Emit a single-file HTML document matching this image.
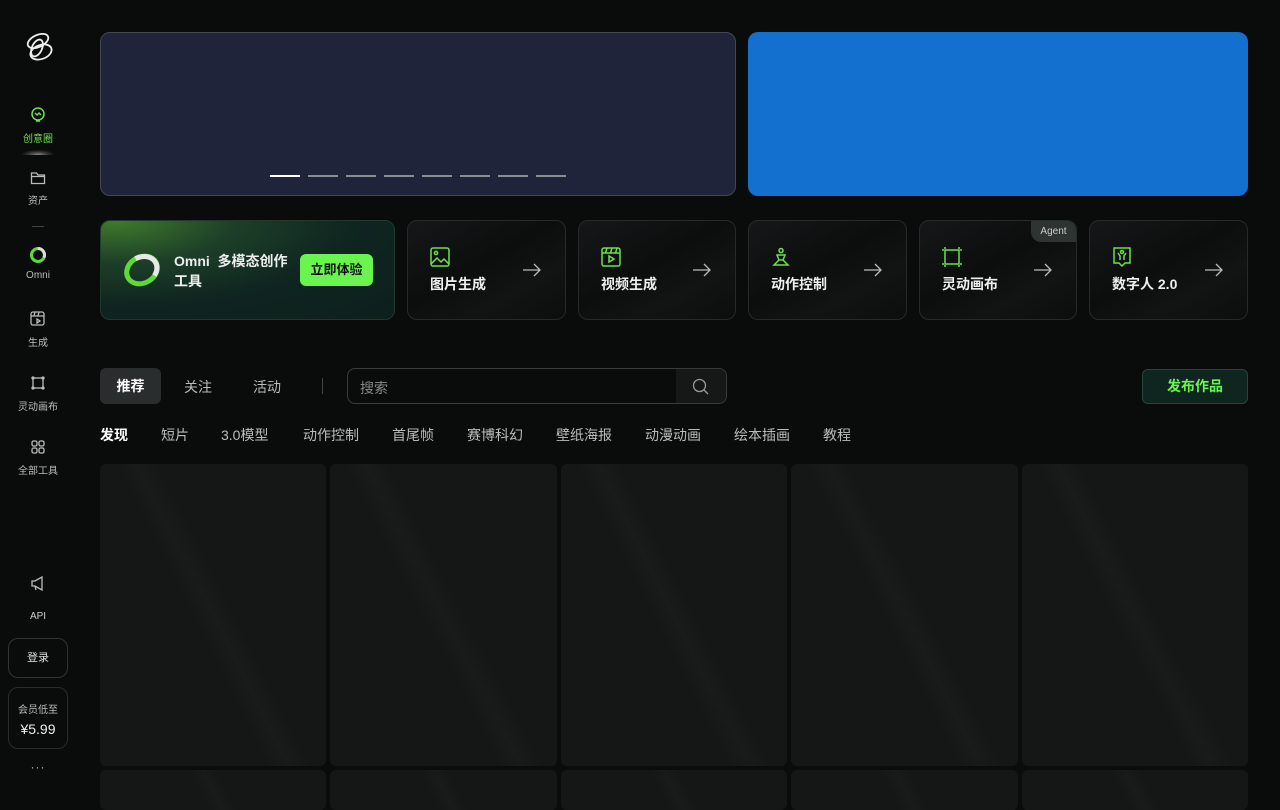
<!DOCTYPE html>
<html><head><meta charset="utf-8">
<style>
*{box-sizing:border-box;margin:0;padding:0}
body{width:1280px;height:800px;overflow:hidden;background:#0a0c0c;font-family:"Liberation Sans","Noto Sans CJK SC",sans-serif;color:#ddd;position:relative}
.abs{position:absolute}
.nav{position:absolute;left:0;width:76px;text-align:center;font-size:10px;color:#bbb}
.nav svg{display:block;margin:0 auto 6px}
.tool{position:absolute;top:220px;height:100px;border-radius:10px;border:1px solid #262a2a;background:linear-gradient(150deg,#151818 0%,#0c0e0e 45%,#121414 70%,#0c0d0d 100%)}
.tool svg{position:absolute;left:22px;top:26px}
.tool .t{position:absolute;left:22px;top:53px;font-size:14px;font-weight:bold;color:#eee}
.tool svg.ar{position:absolute;left:auto;right:24px;top:42px}
.card{position:absolute;border-radius:6px;background:linear-gradient(63deg,#151616 0%,#151616 44%,#191a1a 50%,#151616 56%,#151616 100%)}
.cat{position:absolute;top:425px;font-size:14px;color:#bbb}
</style></head><body>
<!-- sidebar -->
<svg class="abs" style="left:21px;top:29px" width="36" height="36" viewBox="0 0 36 36" fill="none" stroke="#eee" stroke-width="1.8"><ellipse cx="17" cy="12" rx="11" ry="6" transform="rotate(-25 17 12)"/><ellipse cx="20" cy="23" rx="11" ry="7" transform="rotate(-20 20 23)"/><ellipse cx="16" cy="19" rx="5" ry="9" transform="rotate(25 16 19)"/></svg>
<div class="nav" style="top:106px;color:#6ee04a"><svg width="16" height="18" viewBox="0 0 16 18" fill="none" stroke="#6ee04a" stroke-width="1.5"><circle cx="8" cy="8" r="6"/><path d="M5 7l2 2 2-2 2 2M6 15h4"/></svg>创意圈</div>
<div class="abs" style="left:22px;top:150px;width:32px;height:5px;background:radial-gradient(ellipse at 50% 100%,#888 0%,#333 45%,transparent 75%)"></div>
<div class="nav" style="top:170px"><svg width="16" height="16" viewBox="0 0 16 16" fill="none" stroke="#bbb" stroke-width="1.3"><path d="M1.5 3h5l1.5 2h6.5v8.5h-13z M1.5 6.5h13"/></svg>资产</div>
<div class="abs" style="left:32px;top:226px;width:12px;height:1px;background:#444"></div>
<div class="nav" style="top:246px"><svg width="18" height="18" viewBox="0 0 18 18"><circle cx="9" cy="9" r="6.5" fill="none" stroke="#5fd83a" stroke-width="3"/><path d="M9 2.5a6.5 6.5 0 0 1 6 9" stroke="#ddd" stroke-width="3" fill="none"/></svg>Omni</div>
<div class="nav" style="top:310px"><svg width="18" height="18" viewBox="0 0 18 18" fill="none" stroke="#bbb" stroke-width="1.3"><rect x="2" y="2" width="13" height="13" rx="2"/><path d="M2 6h13M6 2l-1 4M10 2l-1 4M8 9v4l3-2z"/></svg>生成</div>
<div class="nav" style="top:374px"><svg width="18" height="18" viewBox="0 0 18 18" fill="none" stroke="#bbb" stroke-width="1.3"><rect x="4" y="4" width="10" height="10"/><circle cx="4" cy="4" r="1" fill="#bbb"/><circle cx="14" cy="4" r="1" fill="#bbb"/><circle cx="4" cy="14" r="1" fill="#bbb"/><circle cx="14" cy="14" r="1" fill="#bbb"/></svg>灵动画布</div>
<div class="nav" style="top:438px"><svg width="18" height="18" viewBox="0 0 18 18" fill="none" stroke="#bbb" stroke-width="1.3"><rect x="3" y="3" width="5" height="5" rx="1.5"/><rect x="10" y="3" width="5" height="5" rx="1.5"/><rect x="3" y="10" width="5" height="5" rx="1.5"/><rect x="10" y="10" width="5" height="5" rx="1.5"/></svg>全部工具</div>
<div class="nav" style="top:575px"><svg width="18" height="18" viewBox="0 0 18 18" fill="none" stroke="#bbb" stroke-width="1.3"><path d="M3 6h3l7-4v13l-7-4H3z M6 11l1 4"/></svg></div>
<div class="nav" style="top:611px;font-size:10px;color:#ccc">API</div>
<div class="abs" style="left:8px;top:638px;width:60px;height:40px;border:1px solid #333;border-radius:10px;text-align:center;line-height:38px;font-size:11px;color:#ddd">登录</div>
<div class="abs" style="left:8px;top:687px;width:60px;height:62px;border:1px solid #2a2c2c;border-radius:10px;text-align:center;font-size:10px;color:#bbb;padding-top:13px">会员低至<div style="font-size:14px;color:#eee;margin-top:5px">¥5.99</div></div>
<div class="nav" style="top:760px;font-size:12px;color:#bbb;letter-spacing:1px">···</div>

<!-- banners -->
<div class="abs" style="left:100px;top:32px;width:636px;height:164px;background:#20243a;border:1px solid #45474f;border-radius:10px"></div>
<div class="abs" style="left:270px;top:175px;width:30px;height:2px;background:#fff"></div>
<div class="abs" style="left:308px;top:175px;width:258px;height:2px;background:repeating-linear-gradient(90deg,#8a8c93 0 30px,transparent 30px 38px)"></div>
<div class="abs" style="left:748px;top:32px;width:500px;height:164px;background:#1470cf;border-radius:10px"></div>

<!-- omni card -->
<div class="abs" style="left:100px;top:220px;width:295px;height:100px;border-radius:10px;border:1px solid #1e3a2c;background:radial-gradient(ellipse at 5% 0%,#3f7a2c 0%,#1d3f28 30%,#0f2520 60%,#0d1f1c 100%)"></div>
<svg class="abs" style="left:122px;top:250px" width="40" height="40" viewBox="0 0 40 40"><g transform="rotate(-30 20 20)"><ellipse cx="20" cy="20" rx="16" ry="13" fill="none" stroke="#5fd83a" stroke-width="5"/><path d="M20 7a16 13 0 0 1 8 24" fill="none" stroke="#e8e8e8" stroke-width="5"/></g></svg>
<div class="abs" style="left:174px;top:251px;font-size:14px;font-weight:bold;color:#eee;line-height:20px;width:120px">Omni&nbsp; 多模态创作<br>工具</div>
<div class="abs" style="left:300px;top:254px;width:73px;height:32px;background:#6af450;border-radius:6px;color:#111;font-size:13px;font-weight:bold;text-align:center;line-height:32px">立即体验</div>

<div class="tool" style="left:407px;width:159px"><svg width="20" height="20" viewBox="0 0 20 20" fill="none" stroke="#6ee04a" stroke-width="1.5"><rect x="1" y="1" width="18" height="18" rx="2"/><circle cx="6" cy="6" r="1.6"/><path d="M1 17l6-6 4 4 3-3 5 5"/></svg><div class="t">图片生成</div><svg class="ar" width="18" height="14" viewBox="0 0 18 14" fill="none" stroke="#bbb" stroke-width="1.3"><path d="M0 7h17M11 1l6 6-6 6"/></svg></div>
<div class="tool" style="left:578px;width:158px"><svg width="20" height="20" viewBox="0 0 20 20" fill="none" stroke="#6ee04a" stroke-width="1.5"><rect x="1" y="1" width="18" height="18" rx="2"/><path d="M1 6h18M6 1l-1.5 5M11 1l-1.5 5M16 1l-1.5 5M8 9v6l5-3z"/></svg><div class="t">视频生成</div><svg class="ar" width="18" height="14" viewBox="0 0 18 14" fill="none" stroke="#bbb" stroke-width="1.3"><path d="M0 7h17M11 1l6 6-6 6"/></svg></div>
<div class="tool" style="left:748px;width:159px"><svg width="20" height="20" viewBox="0 0 20 20" fill="none" stroke="#6ee04a" stroke-width="1.5"><circle cx="10" cy="3.5" r="2"/><path d="M6 8h8l-2 5h-4z M8 13l-5 5h14l-5-5"/></svg><div class="t">动作控制</div><svg class="ar" width="18" height="14" viewBox="0 0 18 14" fill="none" stroke="#bbb" stroke-width="1.3"><path d="M0 7h17M11 1l6 6-6 6"/></svg></div>
<div class="tool" style="left:919px;width:158px"><svg width="20" height="20" viewBox="0 0 20 20" fill="none" stroke="#6ee04a" stroke-width="1.5"><rect x="3" y="3" width="14" height="14"/><path d="M3 0v2M0 3h2M17 0v2M18 3h2M3 18v2M0 17h2M17 18v2M18 17h2"/></svg><div class="t">灵动画布</div><svg class="ar" width="18" height="14" viewBox="0 0 18 14" fill="none" stroke="#bbb" stroke-width="1.3"><path d="M0 7h17M11 1l6 6-6 6"/></svg>
<div class="abs" style="right:0;top:0;width:45px;height:21px;background:#2e3432;border-radius:0 9px 0 10px;font-size:10px;color:#ccc;text-align:center;line-height:21px">Agent</div></div>
<div class="tool" style="left:1089px;width:159px"><svg width="20" height="20" viewBox="0 0 20 20" fill="none" stroke="#6ee04a" stroke-width="1.5"><path d="M2 1h16v15h-5l-3 3-3-3H2z"/><circle cx="10" cy="5" r="1.5"/><path d="M6 6l2 3v4M14 6l-2 3v4"/></svg><div class="t">数字人 2.0</div><svg class="ar" width="18" height="14" viewBox="0 0 18 14" fill="none" stroke="#bbb" stroke-width="1.3"><path d="M0 7h17M11 1l6 6-6 6"/></svg></div>

<!-- tabs -->
<div class="abs" style="left:100px;top:368px;width:61px;height:36px;background:#2a2d2d;border-radius:6px;text-align:center;line-height:36px;font-size:14px;font-weight:bold;color:#fff">推荐</div>
<div class="abs" style="left:184px;top:377px;font-size:14px;color:#bbb">关注</div>
<div class="abs" style="left:253px;top:377px;font-size:14px;color:#bbb">活动</div>
<div class="abs" style="left:322px;top:378px;width:1px;height:16px;background:#444"></div>
<div class="abs" style="left:347px;top:368px;width:380px;height:36px;border:1px solid #3a3c3c;border-radius:8px;overflow:hidden"><div style="position:absolute;left:12px;top:9px;font-size:14px;color:#888">搜索</div><div style="position:absolute;right:0;top:0;width:50px;height:100%;background:#161818"></div><svg style="position:absolute;right:17px;top:9px" width="17" height="17" viewBox="0 0 17 17" fill="none" stroke="#999" stroke-width="1.3"><circle cx="7.5" cy="7.5" r="6"/><path d="M12 12l4 4"/></svg></div>
<div class="abs" style="left:1142px;top:369px;width:106px;height:35px;border:1px solid #27463a;background:#0f2520;border-radius:6px;text-align:center;line-height:33px;font-size:14px;font-weight:bold;color:#6af450">发布作品</div>

<div class="cat" style="left:100px;color:#fff;font-weight:bold">发现</div>
<div class="cat" style="left:161px">短片</div>
<div class="cat" style="left:221px">3.0模型</div>
<div class="cat" style="left:303px">动作控制</div>
<div class="cat" style="left:392px">首尾帧</div>
<div class="cat" style="left:467px">赛博科幻</div>
<div class="cat" style="left:556px">壁纸海报</div>
<div class="cat" style="left:645px">动漫动画</div>
<div class="cat" style="left:734px">绘本插画</div>
<div class="cat" style="left:823px">教程</div>

<div class="card" style="left:100px;top:464px;width:226px;height:302px"></div>
<div class="card" style="left:330px;top:464px;width:227px;height:302px"></div>
<div class="card" style="left:561px;top:464px;width:226px;height:302px"></div>
<div class="card" style="left:791px;top:464px;width:227px;height:302px"></div>
<div class="card" style="left:1022px;top:464px;width:226px;height:302px"></div>
<div class="card" style="left:100px;top:770px;width:226px;height:40px"></div>
<div class="card" style="left:330px;top:770px;width:227px;height:40px"></div>
<div class="card" style="left:561px;top:770px;width:226px;height:40px"></div>
<div class="card" style="left:791px;top:770px;width:227px;height:40px"></div>
<div class="card" style="left:1022px;top:770px;width:226px;height:40px"></div>
</body></html>
